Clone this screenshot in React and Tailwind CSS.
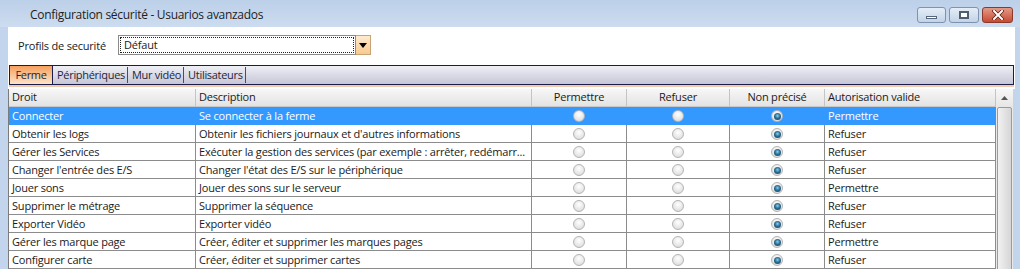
import React from "react";

const rows = [
  ["Connecter", "Se connecter à la ferme", "Permettre", true],
  ["Obtenir les logs", "Obtenir les fichiers journaux et d'autres informations", "Refuser"],
  ["Gérer les Services", "Exécuter la gestion des services (par exemple : arrêter, redémarr...", "Refuser"],
  ["Changer l'entrée des E/S", "Changer l'état des E/S sur le périphérique", "Refuser"],
  ["Jouer sons", "Jouer des sons sur le serveur", "Permettre"],
  ["Supprimer le métrage", "Supprimer  la séquence", "Refuser"],
  ["Exporter Vidéo", "Exporter vidéo", "Refuser"],
  ["Gérer les marque page", "Créer, éditer et supprimer les marques pages", "Permettre"],
  ["Configurer carte", "Créer, éditer et supprimer cartes", "Refuser"],
];

function Radio({ checked }) {
  return (
    <span className="relative inline-block w-[12px] h-[12px] rounded-full border border-[#b4b4b4] bg-[radial-gradient(circle_at_50%_35%,#ffffff,#d6d6d6)]">
      {checked && (
        <span className="absolute left-[1.5px] top-[1.5px] w-[7px] h-[7px] rounded-full bg-[radial-gradient(circle_at_50%_40%,#8fd0e8_0%,#2a6f98_45%,#123a5c_100%)]" />
      )}
    </span>
  );
}

function Cell({ w, sel, center, children }) {
  return (
    <div
      className={
        "h-full flex items-center shrink-0 pt-[1px] " +
        (center ? "justify-center " : "pl-[3px] ") +
        (sel ? "border-r border-[#3399ff] " : "border-r border-[#8c8c8c] ")
      }
      style={{ width: w }}
    >
      {children}
    </div>
  );
}

const W = [187, 336, 95, 103, 95, 171];

export default function App() {
  return (
    <div className="w-[1020px] h-[269px] overflow-hidden bg-[#c3d5ec] font-['Open_Sans','Noto_Sans',sans-serif] text-[11px] text-[#1a1a1a] tracking-[-0.2px]">
      {/* Title bar */}
      <div className="h-[27px] flex items-start justify-between bg-[linear-gradient(#bcd0e9,#cddcef)]">
        <div className="pl-[30px] pt-[6px] text-[12px] text-[#1e1e1e] tracking-[-0.3px]">
          Configuration sécurité - Usuarios avanzados
        </div>
        <div className="flex gap-[3px] pt-[7px] pr-[7px]">
          <div className="w-[29px] h-[16px] rounded-[3px] border border-[#7e93ae] bg-[linear-gradient(#e4edf7,#c3d3e6)] flex items-end justify-center pb-[3px]">
            <div className="w-[11px] h-[3px] bg-white border border-[#55657c]" />
          </div>
          <div className="w-[30px] h-[16px] rounded-[3px] border border-[#7e93ae] bg-[linear-gradient(#e4edf7,#c3d3e6)] flex items-center justify-center">
            <div className="w-[10px] h-[8px] border-[2px] border-[#4d5e74] bg-white" />
          </div>
          <div className="w-[31px] h-[16px] rounded-[3px] border border-[#8a3a2c] bg-[linear-gradient(#e39a88,#c74a32)] flex items-center justify-center">
            <svg width="12" height="10" viewBox="0 0 12 10">
              <path d="M2 1 L10 9 M10 1 L2 9" stroke="#5a1a10" strokeWidth="3.4" strokeLinecap="square" />
              <path d="M2 1 L10 9 M10 1 L2 9" stroke="#ffffff" strokeWidth="2" strokeLinecap="square" />
            </svg>
          </div>
        </div>
      </div>

      {/* White top panel */}
      <div className="ml-[8px] mr-[5px] bg-white">
        <div className="h-[38px] flex items-center pl-[10px]">
          <span className="w-[100px] text-[11px]">Profils de securité</span>
          <div className="flex h-[20px] mb-[2px]">
            <div className="w-[238px] h-full border border-[#8a8a8a] p-[1px] bg-white">
              <div className="h-full border border-dotted border-[#222] flex items-center pl-[3px] text-[11px]">
                Défaut
              </div>
            </div>
            <div className="w-[15px] h-full border border-[#c9a374] border-l-0 bg-[linear-gradient(#fdebd0,#f9c98e)] flex items-center justify-center">
              <svg width="8" height="5" viewBox="0 0 8 5">
                <path d="M0 0 H8 L4 5 Z" fill="#000" />
              </svg>
            </div>
          </div>
        </div>
        {/* Tabs */}
        <div className="mx-[1px] h-[20px] border border-[#1c1c4c] bg-[linear-gradient(#efeff5,#c6c6d8)] flex items-stretch text-[11px] tracking-[-0.3px] text-[#1f1f3a]">
          <div className="w-[43px] border-r border-[#1c1c4c] bg-[linear-gradient(#f5a05c,#fde3c9)] flex items-center justify-center">
            Ferme
          </div>
          <div className="pl-[4px] pr-[2px] flex items-center border-r border-[#4a4a6a] my-[1px]">Périphériques</div>
          <div className="pl-[4px] pr-[2px] flex items-center border-r border-[#4a4a6a] my-[1px]">Mur vidéo</div>
          <div className="pl-[4px] pr-[2px] flex items-center border-r border-[#4a4a6a] my-[1px]">Utilisateurs</div>
        </div>
        <div className="mx-[1px] h-[2px] bg-[#f2c9aa]" />
        <div className="h-[2px]" />
      </div>

      {/* Grid panel */}
      <div className="ml-[8px] mr-[7px] flex border-l border-[#7b7b7b] bg-white h-[200px]">
        <div className="flex-1">
          <div className="h-[18px] flex border-b border-[#c8c8c8] bg-[linear-gradient(#f7f7f7,#e3e3e3)]">
            {["Droit", "Description", "Permettre", "Refuser", "Non précisé", "Autorisation valide"].map((h, i) => (
              <div
                key={h}
                className={
                  "h-full flex items-center shrink-0 border-r border-[#c4c4c4] " +
                  (i >= 2 && i <= 4 ? "justify-center" : "pl-[3px]")
                }
                style={{ width: W[i] }}
              >
                {h}
              </div>
            ))}
          </div>
          {rows.map(([a, b, c, sel]) => (
            <div
              key={a}
              className={
                "h-[18px] flex border-b " +
                (sel ? "bg-[#3399ff] text-white border-[#3399ff]" : "bg-white border-[#8c8c8c]")
              }
            >
              <Cell w={W[0]} sel={sel}>{a}</Cell>
              <Cell w={W[1]} sel={sel}>{b}</Cell>
              <Cell w={W[2]} sel={sel} center><Radio /></Cell>
              <Cell w={W[3]} sel={sel} center><Radio /></Cell>
              <Cell w={W[4]} sel={sel} center><Radio checked /></Cell>
              <Cell w={W[5]} sel={sel}>{c}</Cell>
            </div>
          ))}
        </div>
        {/* Scrollbar */}
        <div className="w-[17px] shrink-0 flex flex-col bg-[#e9e9e9]">
          <div className="h-[18px] flex items-center justify-center bg-[linear-gradient(#f7f7f7,#e6e6e6)]">
            <svg width="7" height="4" viewBox="0 0 7 4">
              <path d="M0 4 L3.5 0 L7 4 Z" fill="#555" />
            </svg>
          </div>
          <div className="flex-1 mx-[1px] rounded-[2px] border border-[#9b9b9b] bg-[linear-gradient(90deg,#f1f1f1,#d6d6d6)]" />
        </div>
      </div>
    </div>
  );
}
